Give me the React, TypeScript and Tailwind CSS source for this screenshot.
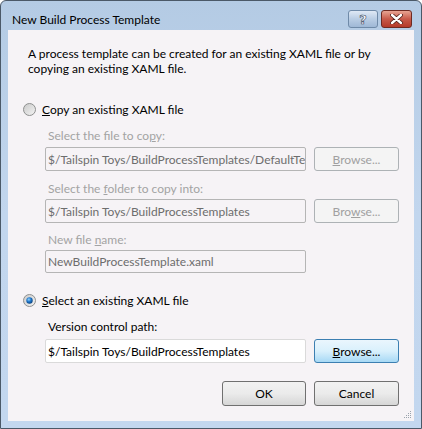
import React from 'react'

const font = { fontFamily: 'Lato, "Noto Sans", sans-serif' }

function Radio({ checked }: { checked?: boolean }) {
  return (
    <svg width="13" height="13" viewBox="0 0 13 13" className="shrink-0">
      <defs>
        <linearGradient id={checked ? 'rg-on' : 'rg-off'} x1="0" y1="0" x2="1" y2="1">
          <stop offset="0" stopColor="#c9c9c9" />
          <stop offset="1" stopColor="#f4f4f4" />
        </linearGradient>
        <radialGradient id="dot" cx="0.4" cy="0.35" r="0.7">
          <stop offset="0" stopColor="#8fd3ff" />
          <stop offset="0.5" stopColor="#1c73c8" />
          <stop offset="1" stopColor="#0a3d78" />
        </radialGradient>
      </defs>
      <circle cx="6.5" cy="6.5" r="6" fill={`url(#${checked ? 'rg-on' : 'rg-off'})`} stroke="#8e8f8f" />
      {checked ? <circle cx="6.5" cy="6.5" r="3.2" fill="url(#dot)" /> : null}
    </svg>
  )
}

function TextBox({ value, disabled, h = 'h-[24px]' }: { value: string; disabled?: boolean; h?: string }) {
  return (
    <div
      className={`${h} w-[261px] shrink-0 overflow-hidden whitespace-nowrap rounded-[2px] border px-[2px] flex items-center text-[12px] ${
        disabled ? 'border-[#b5b5b5] bg-[#f6f3f6] text-[#6d6d6d]' : 'border-[#dadada] bg-white text-black'
      }`}
    >
      {value}
    </div>
  )
}

function BrowseButton({ disabled, focus, children }: { disabled?: boolean; focus?: boolean; children: React.ReactNode }) {
  const cls = disabled
    ? 'border-[#adb2b5] bg-[#f4f4f4] text-[#a0a0a0]'
    : focus
      ? 'border-[#3c7fb1] bg-gradient-to-b from-[#eaf6fd] via-[#d9f0fc] to-[#a7d9f5] text-black'
      : 'border-[#707070] bg-gradient-to-b from-[#f2f2f2] via-[#ebebeb] to-[#cfcfcf] text-black'
  return (
    <div className={`h-[24px] w-[85px] shrink-0 rounded-[3px] border flex items-center justify-center text-[12px] ${cls}`}>
      {children}
    </div>
  )
}

export default function App() {
  return (
    <div
      style={font}
      className="w-[422px] h-[429px] rounded-t-[6px] border border-[#4b5968] bg-gradient-to-b from-[#b4cbe4] via-[#c2d6ee] to-[#c3d7ef] flex flex-col"
    >
      <div className="h-[29px] shrink-0 flex items-start">
        <div className="pl-[11px] pt-[11px] text-[12px] leading-[15px] text-black">New Build Process Template</div>
        <div className="ml-auto mr-[9px] mt-[9px] flex gap-[3px]">
          <div className="h-[18px] w-[30px] rounded-[3px] border border-[#6f8aa8] bg-gradient-to-b from-[#dfe9f5] via-[#b9cde4] to-[#9fb8d6] flex items-center justify-center">
            <span className="text-[13px] font-bold leading-none text-white" style={{ WebkitTextStroke: '0.6px #3a4b5e', fontFamily: '"DejaVu Sans", sans-serif' }}>
              ?
            </span>
          </div>
          <div className="h-[18px] w-[31px] rounded-[3px] border border-[#6e2a22] bg-gradient-to-b from-[#e7a493] via-[#c75a4a] to-[#b43a2a] flex items-center justify-center">
            <svg width="13" height="10" viewBox="0 0 13 10">
              <path d="M2 1 L11 9 M11 1 L2 9" stroke="#4a1a14" strokeWidth="4" strokeLinecap="round" />
              <path d="M2 1 L11 9 M11 1 L2 9" stroke="#ffffff" strokeWidth="2.4" strokeLinecap="round" />
            </svg>
          </div>
        </div>
      </div>

      <div className="mx-[7px] mb-[7px] flex-1 bg-[#f6f3f6] text-[12px] leading-[15px] text-black flex flex-col relative">
        <div className="mt-[16px] pl-[20px] pr-[30px]">
          A process template can be created for an existing XAML file or by copying an existing XAML file.
        </div>

        <div className="mt-[26px] flex items-center pl-[15px] gap-[6px]">
          <Radio />
          <span>
            <u>C</u>opy an existing XAML file
          </span>
        </div>

        <div className="pl-[37px] flex flex-col">
          <div className="mt-[11px] pl-[3px] text-[#a3a3a3]">
            Select the file to co<u>p</u>y:
          </div>
          <div className="mt-[4px] flex items-center gap-[8px]">
            <TextBox disabled value="$/Tailspin Toys/BuildProcessTemplates/DefaultTemplate.xaml" />
            <BrowseButton disabled>
              <span>
                <u>B</u>rowse...
              </span>
            </BrowseButton>
          </div>

          <div className="mt-[10px] pl-[3px] text-[#a3a3a3]">
            Select the <u>f</u>older to copy into:
          </div>
          <div className="mt-[3px] flex items-center gap-[8px]">
            <TextBox disabled value="$/Tailspin Toys/BuildProcessTemplates" />
            <BrowseButton disabled>
              <span>
                Bro<u>w</u>se...
              </span>
            </BrowseButton>
          </div>

          <div className="mt-[9px] pl-[3px] text-[#a3a3a3]">
            New file <u>n</u>ame:
          </div>
          <div className="mt-[3px]">
            <TextBox disabled h="h-[23px]" value="NewBuildProcessTemplate.xaml" />
          </div>
        </div>

        <div className="mt-[20px] flex items-center pl-[15px] gap-[6px]">
          <Radio checked />
          <span>
            <u>S</u>elect an existing XAML file
          </span>
        </div>

        <div className="pl-[37px] flex flex-col">
          <div className="mt-[11px] pl-[3px]">Version control path:</div>
          <div className="mt-[5px] flex items-center gap-[8px]">
            <TextBox value="$/Tailspin Toys/BuildProcessTemplates" />
            <BrowseButton focus>
              <span>
                <u>B</u>rowse...
              </span>
            </BrowseButton>
          </div>
        </div>

        <div className="mt-[18px] flex justify-end gap-[8px] pr-[15px]">
          <div className="h-[25px] w-[84px] rounded-[3px] border border-[#707070] bg-gradient-to-b from-[#f2f2f2] via-[#ebebeb] to-[#d6d6d6] flex items-center justify-center">
            OK
          </div>
          <div className="h-[25px] w-[85px] rounded-[3px] border border-[#707070] bg-gradient-to-b from-[#f2f2f2] via-[#ebebeb] to-[#d6d6d6] flex items-center justify-center">
            Cancel
          </div>
        </div>

        <svg className="absolute right-[2px] bottom-[2px]" width="8" height="8" viewBox="0 0 8 8">
          <g fill="#9aa3ad">
            <rect x="6" y="0" width="1" height="1" />
            <rect x="4" y="2" width="1" height="1" />
            <rect x="6" y="2" width="1" height="1" />
            <rect x="2" y="4" width="1" height="1" />
            <rect x="4" y="4" width="1" height="1" />
            <rect x="6" y="4" width="1" height="1" />
            <rect x="0" y="6" width="1" height="1" />
            <rect x="2" y="6" width="1" height="1" />
            <rect x="4" y="6" width="1" height="1" />
            <rect x="6" y="6" width="1" height="1" />
          </g>
        </svg>
      </div>
    </div>
  )
}
